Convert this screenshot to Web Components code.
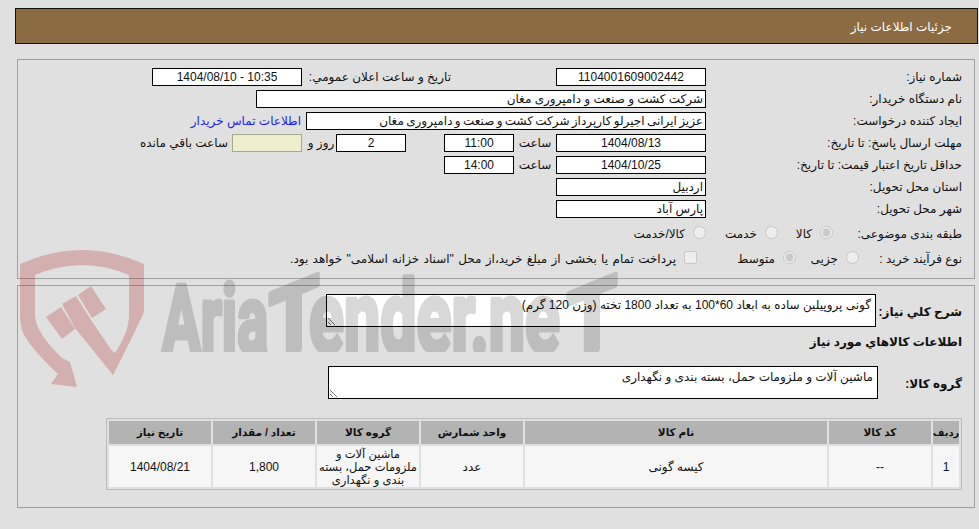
<!DOCTYPE html>
<html lang="fa">
<head>
<meta charset="utf-8">
<title>جزئیات اطلاعات نیاز</title>
<style>
  html, body { margin: 0; background: #e0e0e0; }
  body {
    padding: 8px 1px 0 15px;
    height: 521px;
    box-sizing: border-box;
    overflow: hidden;
    font: 12px "Liberation Sans", "DejaVu Sans", sans-serif;
    color: #111;
  }
</style>
</head>
<body>

<page-header>جزئیات اطلاعات نیاز</page-header>

<info-panel style="height:220px;margin-top:15px;">
  <form-row label="شماره نیاز:">
    <ui-field style="--w:150px">1104001609002442</ui-field>
    <ui-label style="--w:149px;margin-right:105px">تاریخ و ساعت اعلان عمومي:</ui-label>
    <ui-field style="--w:150px">10:35 - 1404/08/10</ui-field>
  </form-row>
  <form-row label="نام دستگاه خریدار:">
    <ui-field start style="--w:450px">شرکت کشت و صنعت و دامپروری مغان</ui-field>
  </form-row>
  <form-row label="ایجاد کننده درخواست:">
    <ui-field start style="--w:400px;word-spacing:-1px">عزیز ایرانی اجیرلو کارپرداز شرکت کشت و صنعت و دامپروری مغان</ui-field>
    <ui-label link style="margin-right:5px">اطلاعات تماس خریدار</ui-label>
  </form-row>
  <form-row label="مهلت ارسال پاسخ: تا تاریخ:">
    <ui-field style="--w:150px">1404/08/13</ui-field>
    <ui-label mid style="--w:42px">ساعت</ui-label>
    <ui-field style="--w:70px">11:00</ui-field>
    <ui-field style="--w:70px;margin-right:38px">2</ui-field>
    <ui-label mid style="--w:30px;margin-left:4px">روز و</ui-label>
    <ui-field note style="--w:70px"></ui-field>
    <ui-label style="margin-right:4px">ساعت باقي مانده</ui-label>
  </form-row>
  <form-row label="حداقل تاریخ اعتبار قیمت: تا تاریخ:">
    <ui-field style="--w:150px">1404/10/25</ui-field>
    <ui-label mid style="--w:42px">ساعت</ui-label>
    <ui-field style="--w:70px">14:00</ui-field>
  </form-row>
  <form-row label="استان محل تحویل:">
    <ui-field start style="--w:150px">اردبیل</ui-field>
  </form-row>
  <form-row label="شهر محل تحویل:">
    <ui-field start style="--w:150px">پارس آباد</ui-field>
  </form-row>
  <form-row label="طبقه بندی موضوعی:" style="--label:129px;margin-top:3px">
    <ui-choice type="radio" checked style="--w:55px">کالا</ui-choice>
    <ui-choice type="radio" style="--w:72px">خدمت</ui-choice>
    <ui-choice type="radio">کالا/خدمت</ui-choice>
  </form-row>
  <form-row label="نوع فرآیند خرید :" style="--label:103px;margin-top:3px">
    <ui-choice type="radio" style="--w:63px">جزیی</ui-choice>
    <ui-choice type="radio" checked style="--w:99px">متوسط</ui-choice>
    <ui-choice type="checkbox" style="word-spacing:1px">پرداخت تمام یا بخشی از مبلغ خرید،از محل "اسناد خزانه اسلامی" خواهد بود.</ui-choice>
  </form-row>
</info-panel>

<info-panel style="height:223px;margin-top:6px;">
  <form-row tall bold label="شرح کلي نياز:" style="--label:86px;height:33px">
    <text-box style="--w:550px">گونی پروپیلین ساده به ابعاد 60*100 به تعداد 1800 تخته (وزن 120 گرم)</text-box>
  </form-row>
  <form-row bold label="اطلاعات کالاهاي مورد نياز" style="--label:300px;margin-top:2px"></form-row>
  <form-row tall bold label="گروه کالا:" style="--label:84px;height:33px;margin-top:11px">
    <text-box style="--w:550px">ماشین آلات و ملزومات حمل، بسته بندی و نگهداری</text-box>
  </form-row>
  <items-table style="margin-top:15px">
    <t-cell head style="font-size:10px">ردیف</t-cell><t-cell head>کد کالا</t-cell><t-cell head>نام کالا</t-cell><t-cell head>واحد شمارش</t-cell><t-cell head>گروه کالا</t-cell><t-cell head>تعداد / مقدار</t-cell><t-cell head>تاریخ نیاز</t-cell>
    <t-cell>1</t-cell><t-cell>--</t-cell><t-cell>کیسه گونی</t-cell><t-cell>عدد</t-cell><t-cell style="font-size:11.5px">ماشین آلات و<br>ملزومات حمل، بسته<br>بندی و نگهداری</t-cell><t-cell>1,800</t-cell><t-cell>1404/08/21</t-cell>
  </items-table>
</info-panel>

<aria-watermark></aria-watermark>

<script>
// small helper, every element below has the same constructor
class Base extends HTMLElement {
  constructor(html) {
    super();
    this.attachShadow({mode: 'open'}).innerHTML = html;
  }
}

customElements.define('page-header', class extends Base {
  constructor() {
    super(`<style>
      :host { display:flex; align-items:center; direction:rtl; height:36px; box-sizing:border-box;
        border:1px solid #111; background:#8b6b41; color:#fff; padding:2px 25px 0 0; }
    </style><slot></slot>`);
  }
});

customElements.define('info-panel', class extends Base {
  constructor() {
    super(`<style>
      :host { display:flex; flex-direction:column; gap:4px; direction:rtl; box-sizing:border-box;
        width:958px; margin-left:2px; border:1px solid #a0a0a0; padding:8px 12px 0; }
    </style><slot></slot>`);
  }
});

customElements.define('form-row', class extends Base {
  constructor() {
    super(`<style>
      :host { display:flex; align-items:center; height:18px; }
      .label { flex:none; width:var(--label,256px); white-space:nowrap; }
      :host([bold]) .label { font-weight:bold; }
      :host([tall]) .label { padding-top:2px; }
    </style><span class="label"></span><slot></slot>`);
  }
  connectedCallback() {
    this.shadowRoot.querySelector('.label').textContent = this.getAttribute('label');
  }
});

customElements.define('ui-field', class extends Base {
  constructor() {
    super(`<style>
      :host { display:flex; align-items:center; justify-content:center; flex:none; box-sizing:border-box;
        width:var(--w); height:18px; border:1px solid #000; background:#fff; white-space:nowrap; overflow:hidden; }
      :host([start]) { justify-content:flex-start; padding-right:2px; }
      :host([note]) { background:#eeeecf; border-color:#a8a88c; }
    </style><slot></slot>`);
  }
});

customElements.define('ui-label', class extends Base {
  constructor() {
    super(`<style>
      :host { display:block; flex:none; width:var(--w,auto); white-space:nowrap; }
      :host([mid]) { text-align:center; }
      :host([link]) { color:#2222ee; }
    </style><slot></slot>`);
  }
});

customElements.define('ui-choice', class extends Base {
  constructor() {
    super(`<style>
      :host { display:flex; align-items:center; flex:none; width:var(--w,auto); white-space:nowrap; }
      input { margin:-3px 0 0 8px; width:13px; height:13px; }
    </style><input disabled><slot></slot>`);
  }
  connectedCallback() {
    const box = this.shadowRoot.querySelector('input');
    box.type = this.getAttribute('type');
    box.checked = this.hasAttribute('checked');
  }
});

customElements.define('text-box', class extends Base {
  constructor() {
    super(`<style>
      :host { display:block; position:relative; flex:none; box-sizing:border-box; width:var(--w); height:33px;
        border:1px solid #000; background:#fff; padding:3px 4px 0; }
      svg { position:absolute; left:0; bottom:0; }
    </style><slot></slot>
    <svg width="9" height="9" viewBox="0 0 9 9"><path d="M1 1l7 7M1 5l3 3" stroke="#777" fill="none"/></svg>`);
  }
});

customElements.define('items-table', class extends Base {
  constructor() {
    super(`<style>
      :host { display:grid; grid-template-columns:26px 102px 302px 102px 102px 102px 102px;
        grid-template-rows:23px 41px; gap:2px; padding:2px; border:1px solid #bbb;
        width:856px; box-sizing:border-box; }
    </style><slot></slot>`);
  }
});

customElements.define('t-cell', class extends Base {
  constructor() {
    super(`<style>
      :host { display:flex; align-items:center; justify-content:center; text-align:center;
        background:#f6f6f6; line-height:13px; white-space:nowrap; padding-top:1px; }
      :host([head]) { background:#b3b3b3; font-weight:bold; font-size:10.5px; padding-top:0; }
    </style><div><slot></slot></div>`);
  }
});

customElements.define('aria-watermark', class extends Base {
  constructor() {
    super(`<style>
      :host { position:absolute; left:0; top:0; width:979px; height:529px; pointer-events:none; }
      svg { display:block; }
      text { font-family:Roboto, "Liberation Sans", sans-serif; font-weight:700; stroke:#000; stroke-width:5; stroke-linejoin:round; }
    </style>
    <svg width="979" height="529" viewBox="0 0 979 529">
      <defs><clipPath id="base"><rect x="0" y="200" width="979" height="152"/></clipPath></defs>
      <g fill="#b02020" opacity=".25">
        <path fill-rule="evenodd" d="M20 264Q82 236 144 264V312Q136 330 113 375L91 338L115 353Q129 332 129 315V275Q82 255 35 275V315Q35 332 62 358L70 362L77 387L51 384L58 374Q27 345 22 330Q20 322 20 315Z"/>
        <path d="M46 317L61 307L75 329L62 339Z"/>
        <path d="M62 304L76 296L91 320L114 354L113 375L75 328Z"/>
        <path d="M78 295L91 286L106 309L92 318Z"/>
      </g>
      <g opacity=".15" fill="#000" clip-path="url(#base)">
        <text x="162" y="352" font-size="94" textLength="106" lengthAdjust="spacingAndGlyphs">Aria</text>
        <text transform="translate(294 352) skewY(-22) scale(.85 1)" text-anchor="middle" font-size="96">T</text>
        <text x="309" y="352" font-size="100" textLength="251" lengthAdjust="spacingAndGlyphs">ender.ne</text>
        <text transform="translate(592 352) skewY(-22) scale(.85 1)" text-anchor="middle" font-size="96">T</text>
      </g>
    </svg>`);
  }
});
</script>
</body>
</html>
